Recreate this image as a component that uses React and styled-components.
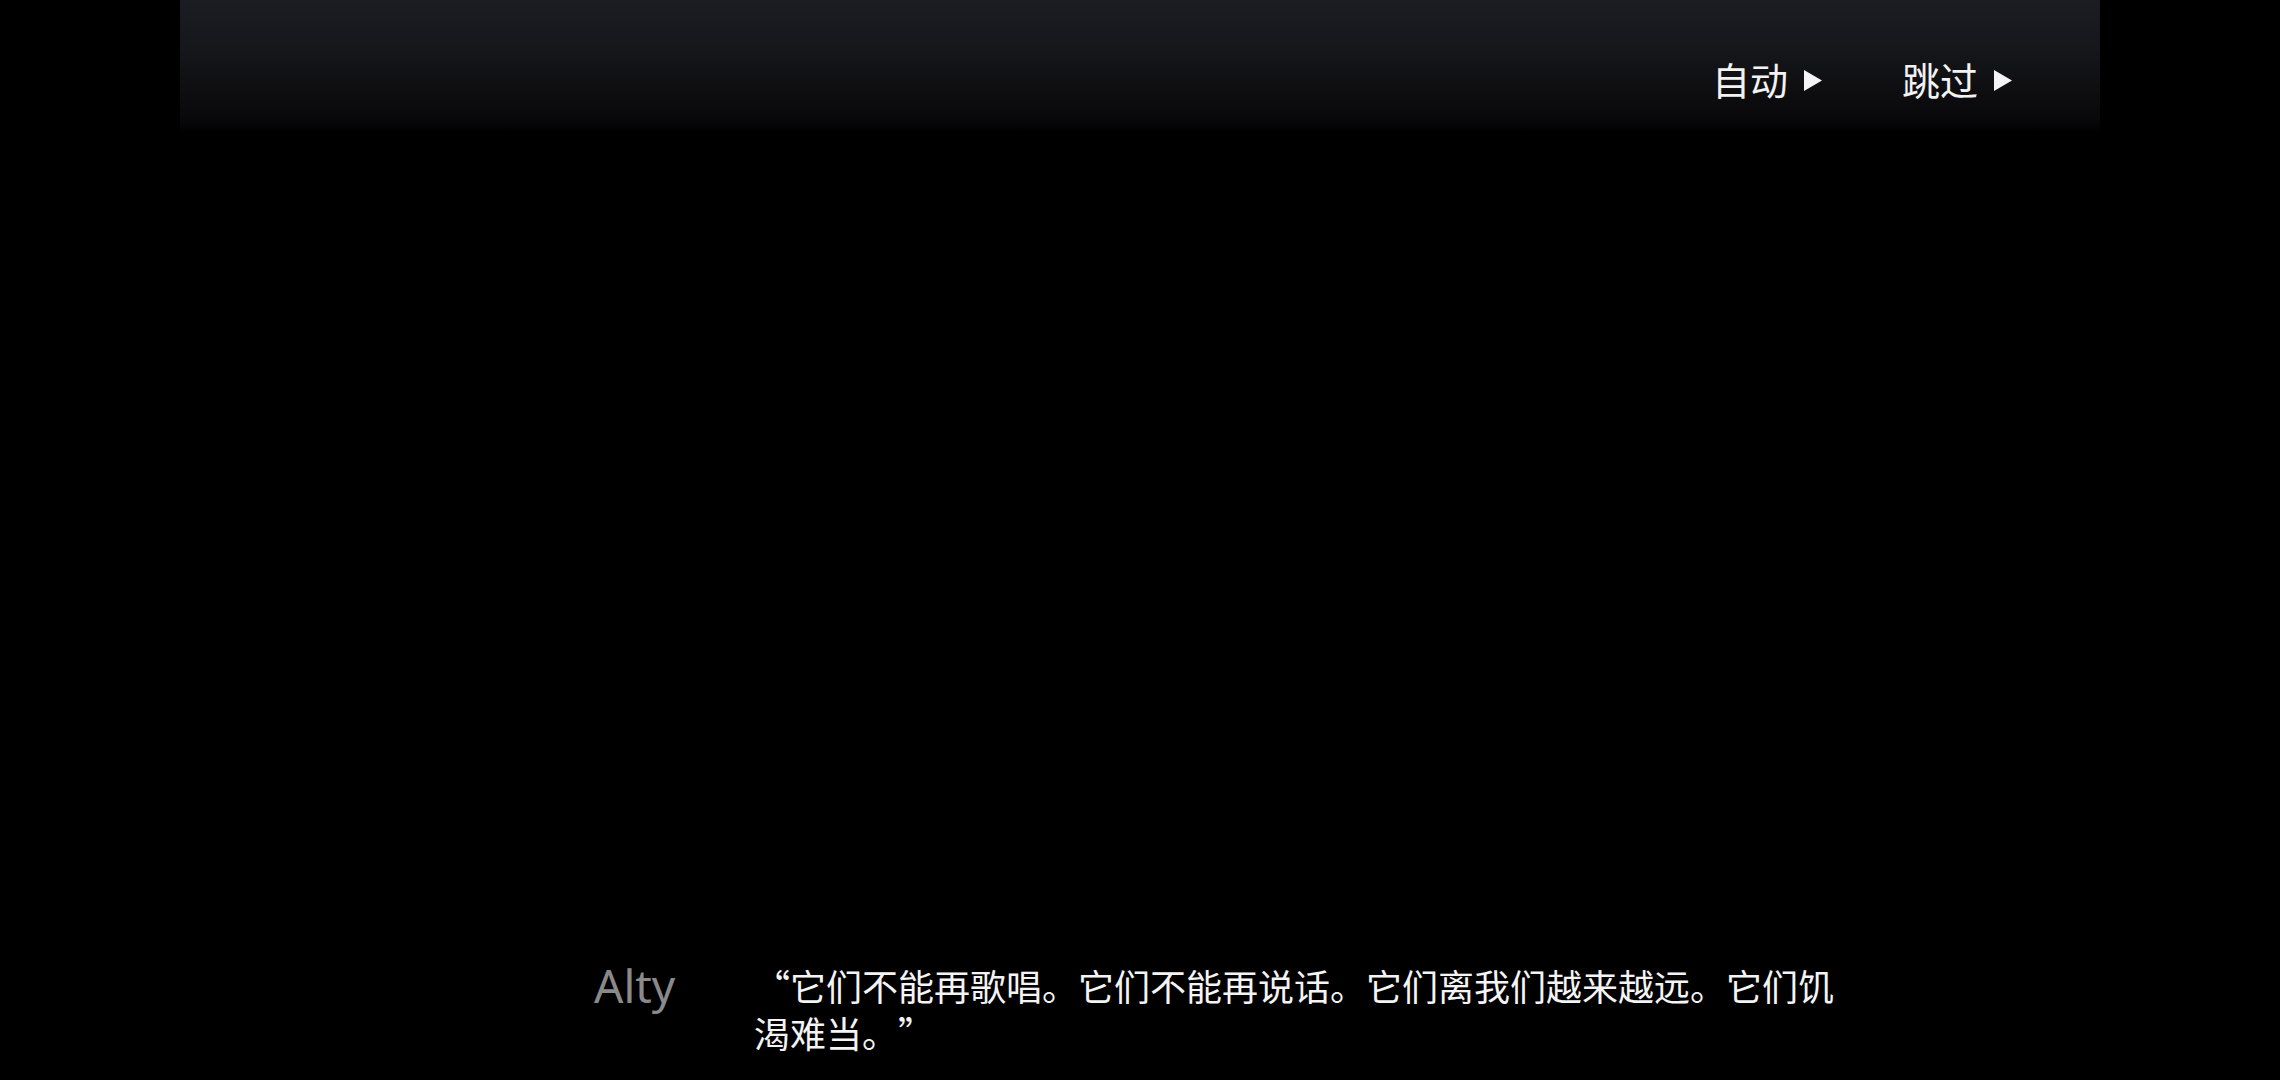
import React from 'react'
import styled, { createGlobalStyle } from 'styled-components'

const GlobalStyle = createGlobalStyle`
	html, body {
		margin: 0;
		padding: 0;
		background: #000;
	}
	body {
		font-family: "Noto Sans", "Noto Sans CJK SC", sans-serif;
		-webkit-font-smoothing: antialiased;
	}
`

const Screen = styled.div`
	width: 2280px;
	height: 1080px;
	background: #000;
	display: flex;
	justify-content: center;
	overflow: hidden;
`

const Stage = styled.div`
	width: 1920px;
	height: 1080px;
	display: flex;
	flex-direction: column;
`

const TopBar = styled.div`
	height: 132px;
	background: linear-gradient(to bottom, #1c1d22 0%, #16171b 35%, #0e0e11 70%, #08080a 92%, #000 100%);
	display: flex;
	justify-content: flex-end;
	align-items: flex-start;
	padding: 53px 88px 0 0;
	box-sizing: border-box;
	gap: 80px;
`

const ControlButton = styled.button`
	background: none;
	border: 0;
	padding: 0;
	margin: 0;
	display: flex;
	align-items: center;
	gap: 16px;
	color: #f2f2f2;
	font-family: "Noto Sans CJK SC", sans-serif;
	font-size: 38px;
	line-height: 52px;
	cursor: pointer;
`

const Arrow = styled.svg`
	width: 18px;
	height: 21px;
	display: block;
	margin-top: 2px;
`

const Spacer = styled.div`
	flex: 1;
`

const DialogueRow = styled.div`
	display: flex;
	align-items: flex-start;
	padding: 0 0 24px 414px;
`

const Speaker = styled.div`
	width: 160px;
	flex-shrink: 0;
	color: #8a8a8a;
	font-family: "Noto Sans", sans-serif;
	font-size: 46px;
	line-height: 47px;
`

const Line = styled.p`
	margin: 0;
	width: 1090px;
	color: #f4f4f4;
	font-family: "Noto Sans CJK SC", sans-serif;
	font-variant-east-asian: full-width;
	text-spacing-trim: space-all;
	font-size: 36px;
	line-height: 47px;
`

const Play = () => (
	<Arrow viewBox="0 0 18 21">
		<polygon points="0,0 18,10.5 0,21" fill="#f4f4f4" />
	</Arrow>
)

const App = () => (
	<Screen>
		<GlobalStyle />
		<Stage>
			<TopBar>
				<ControlButton>自动<Play /></ControlButton>
				<ControlButton>跳过<Play /></ControlButton>
			</TopBar>
			<Spacer />
			<DialogueRow>
				<Speaker>Alty</Speaker>
				<Line>“它们不能再歌唱。它们不能再说话。它们离我们越来越远。它们饥渴难当。”</Line>
			</DialogueRow>
		</Stage>
	</Screen>
)

export default App
